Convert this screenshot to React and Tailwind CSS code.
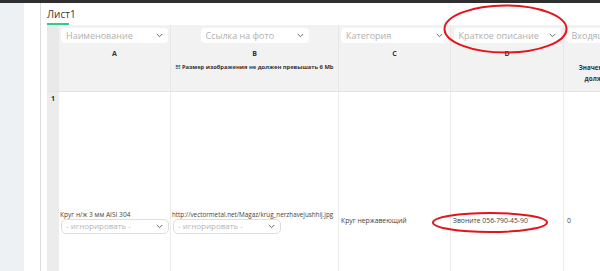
import React from "react";

const Chevron = ({ className = "" }) => (
  <svg width="7" height="5" viewBox="0 0 7 5" className={className}>
    <path d="M0.8 1 L3.5 3.7 L6.2 1" fill="none" stroke="#666" strokeWidth="1" />
  </svg>
);

const HeadSelect = ({ label, w = "w-[107px]" }) => (
  <div className={`${w} h-[15px] bg-white rounded-[4px] flex items-center justify-between pl-[5px] pr-[5px] shrink-0`}>
    <span className="text-[9px] text-[#b0b0b0] whitespace-nowrap leading-none">{label}</span>
    <Chevron />
  </div>
);

const RowSelect = () => (
  <div className="w-[108px] h-[15px] bg-white rounded-[5px] border border-[#dedede] flex items-center justify-between pl-[4px] pr-[5px]">
    <span className="text-[8px] text-[#b5b5b5] whitespace-nowrap leading-none">- игнорировать -</span>
    <Chevron />
  </div>
);

export default function App() {
  const font = { fontFamily: '"Open Sans", "Noto Sans", sans-serif' };
  return (
    <div className="w-[600px] h-[271px] overflow-hidden bg-white flex flex-col relative" style={font}>
      <div className="h-[3px] bg-[#2f2f2f] shrink-0" />
      <div className="flex flex-1 min-h-0">
        <div className="w-[24px] bg-[#eef1f3] shrink-0" />
        <div className="w-[16px] bg-white shrink-0" />
        <div className="w-[1px] bg-[#dcdcdc] shrink-0" />
        <div className="flex-1 min-w-0 pl-[6px] flex flex-col">
          <div className="h-[22px] flex items-end shrink-0">
            <div className="flex flex-col">
              <span className="text-[10px] leading-none text-[#333] pb-[4px]">Лист1</span>
              <div className="h-[2px] w-[22px] bg-[#2ecb8f]" />
            </div>
          </div>
          <div className="flex flex-col w-[700px]">
            {/* Header */}
            <div className="flex h-[67px] bg-[#f2f2f2] border-b border-[#e4e4e4]">
              <div className="w-[12px] bg-[#e9e9e9] shrink-0" />
              <div className="w-[112px] shrink-0 flex flex-col items-center pt-[3px] border-r border-[#e6e6e6]">
                <HeadSelect label="Наименование" />
                <span className="text-[7px] font-bold text-[#333] mt-[7px] leading-none">A</span>
              </div>
              <div className="w-[168px] shrink-0 flex flex-col items-center pt-[3px] border-r border-[#e6e6e6]">
                <HeadSelect label="Ссылка на фото" w="w-[108px]" />
                <span className="text-[7px] font-bold text-[#333] mt-[7px] leading-none">B</span>
                <span className="text-[5.8px] font-bold text-[#333] mt-[8px] leading-none whitespace-nowrap">!!! Размер изображения не должен превышать 6 Mb</span>
              </div>
              <div className="w-[112px] shrink-0 flex flex-col items-center pt-[3px] border-r border-[#e6e6e6]">
                <HeadSelect label="Категория" />
                <span className="text-[7px] font-bold text-[#333] mt-[7px] leading-none">C</span>
              </div>
              <div className="w-[113px] shrink-0 flex flex-col items-center pt-[3px] border-r border-[#e6e6e6]">
                <HeadSelect label="Краткое описание" />
                <span className="text-[7px] font-bold text-[#333] mt-[7px] leading-none">D</span>
              </div>
              <div className="w-[112px] shrink-0 flex flex-col items-center pt-[3px]">
                <HeadSelect label="Входящая цена" />
                <span className="text-[7px] font-bold text-[#333] mt-[7px] leading-none">E</span>
                <span className="text-[6.3px] font-bold text-[#333] mt-[5px] leading-[11px] text-center whitespace-nowrap">Значения по умолчанию<br />должно быть числом</span>
              </div>
            </div>
            {/* Row 1 */}
            <div className="flex h-[258px]">
              <div className="w-[12px] bg-[#ececec] shrink-0 flex justify-center pt-[3px]">
                <span className="text-[7px] font-bold text-[#333] leading-none">1</span>
              </div>
              <div className="w-[112px] shrink-0 flex flex-col justify-center pl-[1px] pt-[1px] border-r border-[#ebebeb]">
                <span className="text-[6.6px] text-[#444] leading-[9px] whitespace-nowrap">Круг н/ж 3 мм AISI 304</span>
                <div className="pl-[1px]"><RowSelect /></div>
              </div>
              <div className="w-[168px] shrink-0 flex flex-col justify-center pl-[1px] pt-[1px] border-r border-[#ebebeb] overflow-hidden">
                <span className="text-[6.3px] text-[#444] leading-[9px] whitespace-nowrap">http://vectormetal.net/Magaz/krug_nerzhavejushhij.jpg</span>
                <div className="pl-[1px]"><RowSelect /></div>
              </div>
              <div className="w-[112px] shrink-0 flex items-center pl-[2px] border-r border-[#ebebeb]">
                <span className="text-[6.8px] text-[#444] whitespace-nowrap">Круг нержавеющий</span>
              </div>
              <div className="w-[113px] shrink-0 flex items-center pl-[2px] border-r border-[#ebebeb]">
                <span className="text-[6.8px] text-[#444] whitespace-nowrap">Звоните 056-790-45-90</span>
              </div>
              <div className="w-[112px] shrink-0 flex items-center pl-[3px]">
                <span className="text-[7px] text-[#444]">0</span>
              </div>
            </div>
          </div>
        </div>
      </div>
      <svg className="absolute inset-0 pointer-events-none" width="600" height="271" viewBox="0 0 600 271">
        <ellipse cx="505.5" cy="29" rx="61" ry="23.5" fill="none" stroke="#e3141b" strokeWidth="2" />
        <ellipse cx="490" cy="222.5" rx="57" ry="9.5" fill="none" stroke="#e3141b" strokeWidth="2" />
      </svg>
    </div>
  );
}
